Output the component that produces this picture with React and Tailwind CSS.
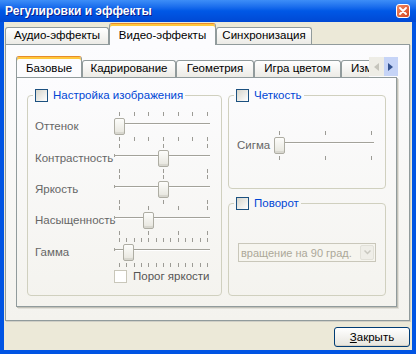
import React from 'react';

const ticks = (n) => Array.from({ length: n }, (_, i) => i / (n - 1));

const Tab = ({ label, active, className = '' }) => {
  if (active) {
    return (
      <div
        className={`relative z-10 -mb-px flex h-[22px] items-start justify-center rounded-t-[3px] border border-b-0 border-[#919b9c] border-t-[#e68b2c] bg-[#fcfcfe] pt-[3px] shadow-[inset_0_2px_0_#ffc83c] ${className}`}
      >
        {label}
      </div>
    );
  }
  return (
    <div
      className={`flex h-[17px] shrink-0 items-center justify-center rounded-t-[3px] border border-b-0 border-[#919b9c] bg-linear-to-b from-white to-[#ecebe6] ${className}`}
    >
      {label}
    </div>
  );
};

const Check = ({ dim }) => (
  <span
    className={`block h-[13px] w-[13px] shrink-0 border ${
      dim ? 'border-[#c9c7ba] bg-white' : 'border-[#1c5180] bg-linear-to-br from-[#d6d5cc] to-white'
    }`}
  />
);

// track sits 15px from the top of the row, ticks above and below the thumb
const Slider = ({ width, height, offset, span, value, top, bottom }) => {
  const x = (t) => offset + t * span;
  return (
    <div className="relative shrink-0" style={{ width, height }}>
      <svg width={width} height={height} className="overflow-visible">
        <line x1={offset - 4} y1={15.5} x2={offset + span + 3} y2={15.5} stroke="#a3a29a" />
        <line x1={offset - 3} y1={16.5} x2={offset + span + 3} y2={16.5} stroke="#ffffff" />
        <line x1={offset - 4.5} y1={14} x2={offset - 4.5} y2={17} stroke="#a3a29a" />
        {top.map((t) => (
          <line key={'t' + t} x1={Math.round(x(t)) + 0.5} y1={4} x2={Math.round(x(t)) + 0.5} y2={8} stroke="#9c9b95" />
        ))}
        {bottom.map((t) => (
          <line key={'b' + t} x1={Math.round(x(t)) + 0.5} y1={29} x2={Math.round(x(t)) + 0.5} y2={33} stroke="#9c9b95" />
        ))}
      </svg>
      <div
        className="absolute top-[10px] h-[17px] w-[11px] rounded-[2px] border border-[#aeada3] bg-linear-to-b from-[#fdfdfb] to-[#e6e5dd] shadow-[inset_0_-2px_0_#d8d7cf]"
        style={{ left: Math.round(x(value)) - 5 }}
      />
    </div>
  );
};

const rows = [
  { label: 'Оттенок', h: 32, value: 0, top: ticks(7), bottom: ticks(7) },
  { label: 'Контрастность', h: 31, value: 0.5, top: ticks(3), bottom: ticks(3) },
  { label: 'Яркость', h: 31, value: 0.5, top: ticks(3), bottom: ticks(3) },
  { label: 'Насыщенность', h: 32, value: 1 / 3, top: ticks(4), bottom: ticks(4) },
  { label: 'Гамма', h: 36, value: 0.1, top: ticks(13), bottom: ticks(13) },
];

const Legend = ({ children, dim }) => (
  <legend className="ml-[5px] px-[2px]">
    <span className="flex items-center gap-[5px]">
      <Check dim={dim} />
      <span className="leading-[13px] text-[#0046d5]">{children}</span>
    </span>
  </legend>
);

export default function App() {
  return (
    <div className="flex h-[354px] w-[416px] flex-col bg-[#0054e3] font-['Liberation_Sans',Arial,sans-serif] text-[11.5px] text-black">
      {/* title bar */}
      <div className="flex h-[22px] shrink-0 items-center justify-between bg-linear-to-b from-[#3d8ef7] via-[#0058e6] to-[#0048d4] pl-[5px] pr-[6px]">
        <span className="text-[12px] font-bold text-white [text-shadow:1px_1px_0_#0a1e8c]">Регулировки и эффекты</span>
        <div className="flex h-[14px] w-[14px] items-center justify-center rounded-[3px] border border-white bg-linear-to-br from-[#f08a62] to-[#d4421c]">
          <svg width="8" height="8" viewBox="0 0 8 8">
            <path d="M1 1L7 7M7 1L1 7" stroke="#fff" strokeWidth="1.8" strokeLinecap="round" />
          </svg>
        </div>
      </div>

      {/* window body */}
      <div className="mx-[4px] mb-[4px] flex flex-1 flex-col bg-[#ece9d8] pl-[1px] pr-[2px] pt-[1px]">
        <div className="flex h-[21px] items-end">
          <Tab label="Аудио-эффекты" className="w-[104px]" />
          <Tab label="Видео-эффекты" active className="w-[107px]" />
          <Tab label="Синхронизация" className="w-[96px]" />
        </div>

        <div className="h-[277px] border border-[#919b9c] bg-linear-to-b from-[#fcfcfe] to-[#f4f3ee] pl-[10px] pt-[11px] shadow-[1px_1px_0_#d0cfc6]">
          <div className="flex h-[21px] items-end">
            <div className="flex w-[353px] items-end overflow-hidden">
              <Tab label="Базовые" active className="w-[66px] shrink-0" />
              <Tab label="Кадрирование" className="w-[94px]" />
              <Tab label="Геометрия" className="w-[78px]" />
              <Tab label="Игра цветом" className="w-[87px]" />
              <Tab label="Изменение" className="w-[80px] !justify-start pl-[9px]" />
            </div>
            <div className="mb-[1px] flex h-[19px] w-[29px] self-end">
              <div className="flex flex-1 items-center justify-center bg-[#eeede6]">
                <svg width="5" height="8" viewBox="0 0 5 8">
                  <path d="M5 0V8L0 4Z" fill="#c5c4bc" />
                </svg>
              </div>
              <div className="flex flex-1 items-center justify-center bg-[#c6d4f7]">
                <svg width="5" height="8" viewBox="0 0 5 8">
                  <path d="M0 0V8L5 4Z" fill="#34528f" />
                </svg>
              </div>
            </div>
          </div>

          <div className="flex w-[381px] gap-[6px] border border-[#919b9c] bg-linear-to-b from-[#fcfcfe] to-[#f4f3ee] pb-[10px] pl-[10px] pt-[11px] shadow-[1px_1px_0_#c2c1b8,2px_2px_0_#e2e1da]">
            {/* left group */}
            <fieldset className="h-[207px] w-[195px] rounded-[4px] border border-[#d0d0bf]">
              <Legend>Настройка изображения</Legend>
              <div className="flex flex-col pl-[7px] pt-[6px]">
                {rows.map((r) => (
                  <div key={r.label} className="flex" style={{ height: r.h }}>
                    <span className="w-[78px] shrink-0 whitespace-nowrap pt-[11px] leading-[14px] text-[#666]">{r.label}</span>
                    <Slider width={98} height={r.h} offset={6} span={88} value={r.value} top={r.top} bottom={r.bottom} />
                  </div>
                ))}
                <div className="ml-[79px] flex items-center gap-[6px]">
                  <Check dim />
                  <span className="leading-[13px] text-[#555]">Порог яркости</span>
                </div>
              </div>
            </fieldset>

            {/* right column */}
            <div className="flex flex-col gap-[8px]">
              <fieldset className="h-[100px] w-[158px] rounded-[4px] border border-[#d0d0bf]">
                <Legend>Четкость</Legend>
                <div className="flex h-[56px] pl-[8px] pt-[25px]">
                  <span className="w-[36px] shrink-0 pt-[11px] leading-[14px] text-[#666]">Сигма</span>
                  <Slider width={102} height={31} offset={6} span={92} value={0} top={ticks(3)} bottom={ticks(3)} />
                </div>
              </fieldset>

              <fieldset className="h-[99px] w-[158px] rounded-[4px] border border-[#d0d0bf]">
                <Legend>Поворот</Legend>
                <div className="ml-[9px] mt-[33px] flex h-[19px] w-[138px] items-center border border-[#c9c7ba] bg-[#f6f5ef] pr-px">
                  <span className="flex-1 whitespace-nowrap pl-[2px] text-[11px] leading-[14px] text-[#aca899]">вращение на 90 град.</span>
                  <span className="flex h-[15px] w-[14px] items-center justify-center rounded-[2px] border border-[#e2e1d9] bg-[#efeee8]">
                    <svg width="7" height="5" viewBox="0 0 7 5">
                      <path d="M0.5 0.5L3.5 3.5L6.5 0.5" fill="none" stroke="#c9c8c0" strokeWidth="1.5" />
                    </svg>
                  </span>
                </div>
              </fieldset>
            </div>
          </div>
        </div>

        <div className="flex justify-end pt-[6px]">
          <button className="flex h-[20px] w-[76px] items-center justify-center rounded-[3px] border border-[#003c74] bg-linear-to-b from-white to-[#e6e5de] leading-[14px] shadow-[inset_0_-1px_0_#d6d0c5]">
            <span>
              <span className="underline">З</span>акрыть
            </span>
          </button>
        </div>
      </div>
    </div>
  );
}
